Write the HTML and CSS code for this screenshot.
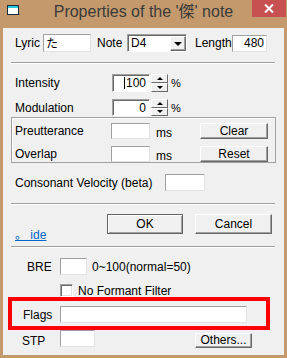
FILE: index.html
```html
<!DOCTYPE html>
<html lang="ja">
<head>
  <meta charset="UTF-8">
  <title>Properties of the note</title>
  <link rel="stylesheet" href="styles.css">
</head>
<body>

  <div class="janela">
    <div class="barra-titulo">
      <div class="icone-cel">
        <svg class="icone" width="13" height="11" viewBox="0 0 13 11">
          <rect x="0.5" y="0.5" width="11" height="9" fill="#fff" stroke="#1a2a3a"/>
          <rect x="1" y="1" width="10" height="2" fill="#27c7e0"/>
          <rect x="12" y="9" width="1" height="1" fill="#6a6a6a"/>
        </svg>
      </div>
      <div class="titulo">Properties of the '傑' note</div>
      <div class="fechar-cel">
        <div class="fechar">
          <svg width="10" height="9" viewBox="0 0 10 9">
            <path d="M1 0.5 L9 8.5 M9 0.5 L1 8.5" stroke="#fff" stroke-width="2"/>
          </svg>
        </div>
      </div>
    </div>

    <div class="cliente">
      <!-- Linha Lyric / Note / Length -->
      <div class="linha linha-lyric">
        <span class="rot rot-lyric">Lyric</span>
        <div class="edit edit-lyric">た</div>
        <span class="rot rot-note">Note</span>
        <div class="combo">
          <span class="combo-valor">D4</span>
          <span class="combo-botao"><span class="seta-baixo"></span></span>
        </div>
        <span class="rot rot-length">Length</span>
        <div class="edit edit-length">480</div>
      </div>

      <div class="separador sep-1"></div>

      <div class="linha linha-intensity">
        <span class="rot rot-larga">Intensity</span>
        <div class="edit edit-spin"><span class="cursor"></span>100</div>
        <div class="spin">
          <span class="spin-botao"><span class="seta-mini-cima"></span></span>
          <span class="spin-botao"><span class="seta-mini-baixo"></span></span>
        </div>
        <span class="pct">%</span>
      </div>

      <div class="linha linha-modulation">
        <span class="rot rot-larga">Modulation</span>
        <div class="edit edit-spin">0</div>
        <div class="spin">
          <span class="spin-botao"><span class="seta-mini-cima"></span></span>
          <span class="spin-botao"><span class="seta-mini-baixo"></span></span>
        </div>
        <span class="pct">%</span>
      </div>

      <!-- Grupo Preutterance / Overlap -->
      <div class="grupo">
        <div class="linha linha-grupo">
          <span class="rot rot-grupo">Preutterance</span>
          <div class="edit edit-ms"></div>
          <span class="ms">ms</span>
          <button class="botao botao-grupo">Clear</button>
        </div>
        <div class="linha linha-grupo linha-overlap">
          <span class="rot rot-grupo">Overlap</span>
          <div class="edit edit-ms"></div>
          <span class="ms">ms</span>
          <button class="botao botao-grupo">Reset</button>
        </div>
      </div>

      <div class="linha linha-consoante">
        <span class="rot rot-consoante">Consonant Velocity (beta)</span>
        <div class="edit edit-consoante"></div>
      </div>

      <div class="separador sep-2"></div>

      <div class="linha linha-botoes">
        <a class="link-hide" href="#">。 ide</a>
        <button class="botao botao-ok">OK</button>
        <button class="botao botao-cancel">Cancel</button>
      </div>

      <div class="separador sep-3"></div>

      <div class="linha linha-bre">
        <span class="rot rot-bre">BRE</span>
        <div class="edit edit-bre"></div>
        <span class="dica">0~100(normal=50)</span>
      </div>

      <div class="linha linha-check">
        <span class="checkbox"></span>
        <span class="rot-check">No Formant Filter</span>
      </div>

      <div class="linha linha-flags">
        <span class="rot rot-flags">Flags</span>
        <div class="edit edit-flags"></div>
      </div>

      <div class="linha linha-stp">
        <span class="rot rot-stp">STP</span>
        <div class="edit edit-stp"></div>
        <button class="botao botao-others">Others...</button>
      </div>

      <!-- destaque vermelho sobre o campo Flags -->
      <div class="destaque"></div>
    </div>
  </div>

</body>
</html>
```

FILE: styles.css
```css
body {
  margin: 0;
  font-family: "Liberation Sans", Arial, "Noto Sans CJK JP", sans-serif;
  font-size: 12px;
  color: #000;
  background: #c49a6d;
}
.janela {
  width: 287px;
  height: 358px;
  background: #c49a6d;
  display: flex;
  flex-direction: column;
}

/* Barra de titulo */
.barra-titulo {
  height: 28px;
  display: grid;
  grid-template-columns: 1fr auto 1fr;
}
.icone-cel {
  padding: 5px 0 0 7px;
}
.icone {
  display: block;
}
.titulo {
  font-family: "Liberation Sans", "Noto Sans CJK JP", sans-serif;
  font-size: 16px;
  color: #3a3a3a;
  line-height: 24px;
  white-space: nowrap;
}
.fechar-cel {
  display: flex;
  justify-content: flex-end;
  padding-right: 1px;
}
.fechar {
  width: 34px;
  height: 17px;
  background: #c75050;
  display: flex;
  align-items: center;
  justify-content: center;
}

/* Area cliente */
.cliente {
  position: relative;
  flex: 1;
  margin: 0 3px 3px 3px;
  padding: 0 8px;
  background: #f0f0f0;
  display: flex;
  flex-direction: column;
}
.linha {
  display: flex;
  align-items: center;
  padding-left: 4px;
}
.rot {
  white-space: nowrap;
}
.separador {
  height: 1px;
  border-top: 1px solid #a0a0a0;
  background: #fff;
  margin-right: 1px;
}

/* campos de texto */
.edit {
  box-sizing: border-box;
  background: #fff;
  border: 1px solid;
  border-color: #a0a0a0 #e3e3e3 #e3e3e3 #a0a0a0;
  height: 17px;
  line-height: 15px;
  padding: 0 3px;
  white-space: nowrap;
}

.linha-lyric {
  margin-top: 6px;
  height: 18px;
}
.rot-lyric {
  width: 28px;
}
.edit-lyric {
  width: 48px;
  height: 18px;
  font-family: "Noto Sans CJK JP", sans-serif;
  font-size: 12px;
  line-height: 16px;
  padding-left: 2px;
}
.rot-note {
  margin-left: 6px;
  width: 30px;
}
.combo {
  box-sizing: border-box;
  width: 60px;
  height: 18px;
  background: #fff;
  border: 1px solid;
  border-color: #a0a0a0 #fff #fff #a0a0a0;
  box-shadow: inset 1px 1px 0 #696969;
  display: flex;
  padding: 1px 0 0 1px;
}
.combo-valor {
  flex: 1;
  padding-left: 2px;
  line-height: 15px;
}
.combo-botao {
  box-sizing: border-box;
  width: 16px;
  height: 15px;
  background: #f0f0f0;
  border: 1px solid;
  border-color: #fff #696969 #696969 #fff;
  box-shadow: inset -1px -1px 0 #a0a0a0;
  display: flex;
  align-items: center;
  justify-content: center;
}
.seta-baixo {
  width: 0;
  height: 0;
  border-left: 4px solid transparent;
  border-right: 4px solid transparent;
  border-top: 4px solid #000;
  margin-left: -1px;
}
.rot-length {
  margin-left: 8px;
  width: 37px;
}
.edit-length {
  width: 35px;
  text-align: right;
  padding-right: 2px;
}

.sep-1 {
  margin-top: 10px;
}

.linha-intensity {
  margin-top: 10px;
  height: 18px;
}
.linha-modulation {
  margin-top: 7px;
  height: 17px;
}
.rot-larga {
  width: 97px;
}
.edit-spin {
  width: 38px;
  height: 100%;
  border-color: #a0a0a0 #fff #fff #a0a0a0;
  box-shadow: inset 1px 1px 0 #696969;
  text-align: right;
  padding-right: 3px;
  line-height: 16px;
}
.cursor {
  display: inline-block;
  width: 1px;
  height: 12px;
  background: #000;
  vertical-align: -2px;
  margin-right: 1px;
}
.spin {
  margin-left: 1px;
  width: 17px;
  height: 100%;
  display: flex;
  flex-direction: column;
}
.spin-botao {
  box-sizing: border-box;
  flex: 1;
  background: #f0f0f0;
  border: 1px solid;
  border-color: #fff #696969 #696969 #fff;
  display: flex;
  align-items: center;
  justify-content: center;
}
.seta-mini-cima {
  width: 0;
  height: 0;
  border-left: 3px solid transparent;
  border-right: 3px solid transparent;
  border-bottom: 3px solid #000;
}
.seta-mini-baixo {
  width: 0;
  height: 0;
  border-left: 3px solid transparent;
  border-right: 3px solid transparent;
  border-top: 3px solid #000;
}
.pct {
  margin-left: 3px;
  font-size: 11px;
}

/* grupo */
.grupo {
  margin-top: 1px;
  border: 1px solid #a0a0a0;
  box-shadow: inset 1px 1px 0 #fff;
  padding-top: 5px;
}
.linha-grupo {
  height: 16px;
  padding-left: 3px;
}
.linha-overlap {
  margin-top: 7px;
}
.rot-grupo {
  width: 96px;
}
.edit-ms {
  width: 39px;
  height: 16px;
}
.ms {
  margin-left: 6px;
  width: 44px;
  padding-top: 3px;
}

/* botoes */
.botao {
  box-sizing: border-box;
  font-family: "Liberation Sans", Arial, sans-serif;
  font-size: 12px;
  color: #000;
  background: #f0f0f0;
  border: 1px solid;
  border-color: #fff #696969 #696969 #fff;
  box-shadow: inset -1px -1px 0 #a0a0a0;
  padding: 0;
  margin: 0;
}
.botao-grupo {
  width: 68px;
  height: 16px;
  line-height: 13px;
  align-self: flex-start;
}

.linha-consoante {
  margin-top: 11px;
  height: 17px;
}
.rot-consoante {
  width: 150px;
}
.edit-consoante {
  width: 40px;
}

.sep-2 {
  margin-top: 12px;
}

.linha-botoes {
  margin-top: 9px;
  height: 28px;
  align-items: flex-start;
}
.link-hide {
  align-self: flex-end;
  color: #0066cc;
  text-decoration: underline;
  width: 92px;
  font-size: 12px;
  line-height: 12px;
  padding-bottom: 1px;
}
.botao-ok {
  width: 76px;
  height: 20px;
  border: 1px solid #646464;
  box-shadow: inset 1px 1px 0 #fff, inset -1px -1px 0 #a0a0a0;
}
.botao-cancel {
  margin-left: 12px;
  width: 77px;
  height: 20px;
}

.sep-3 {
  margin-top: 4px;
}

.linha-bre {
  margin-top: 10px;
  height: 17px;
  padding-left: 16px;
}
.rot-bre {
  width: 33px;
}
.edit-bre {
  width: 27px;
}
.dica {
  margin-left: 5px;
}

.linha-check {
  margin-top: 9px;
  height: 13px;
  padding-left: 49px;
}
.checkbox {
  box-sizing: border-box;
  width: 13px;
  height: 13px;
  background: #fff;
  border: 1px solid;
  border-color: #a0a0a0 #fff #fff #a0a0a0;
  box-shadow: inset 1px 1px 0 #696969, inset -1px -1px 0 #e3e3e3;
}
.rot-check {
  margin-left: 5px;
}

.linha-flags {
  margin-top: 9px;
  height: 17px;
  padding-left: 12px;
}
.rot-flags {
  width: 37px;
}
.edit-flags {
  width: 187px;
}

.linha-stp {
  margin-top: 7px;
  height: 17px;
  padding-left: 11px;
}
.rot-stp {
  width: 38px;
  padding-top: 4px;
}
.edit-stp {
  width: 35px;
}
.botao-others {
  margin-left: 100px;
  margin-top: 3px;
  width: 57px;
  height: 15px;
  line-height: 12px;
}

/* retangulo vermelho de destaque */
.destaque {
  position: absolute;
  left: 5px;
  top: 269px;
  width: 262px;
  height: 33px;
  box-sizing: border-box;
  border: 4px solid #ff0000;
}
```
